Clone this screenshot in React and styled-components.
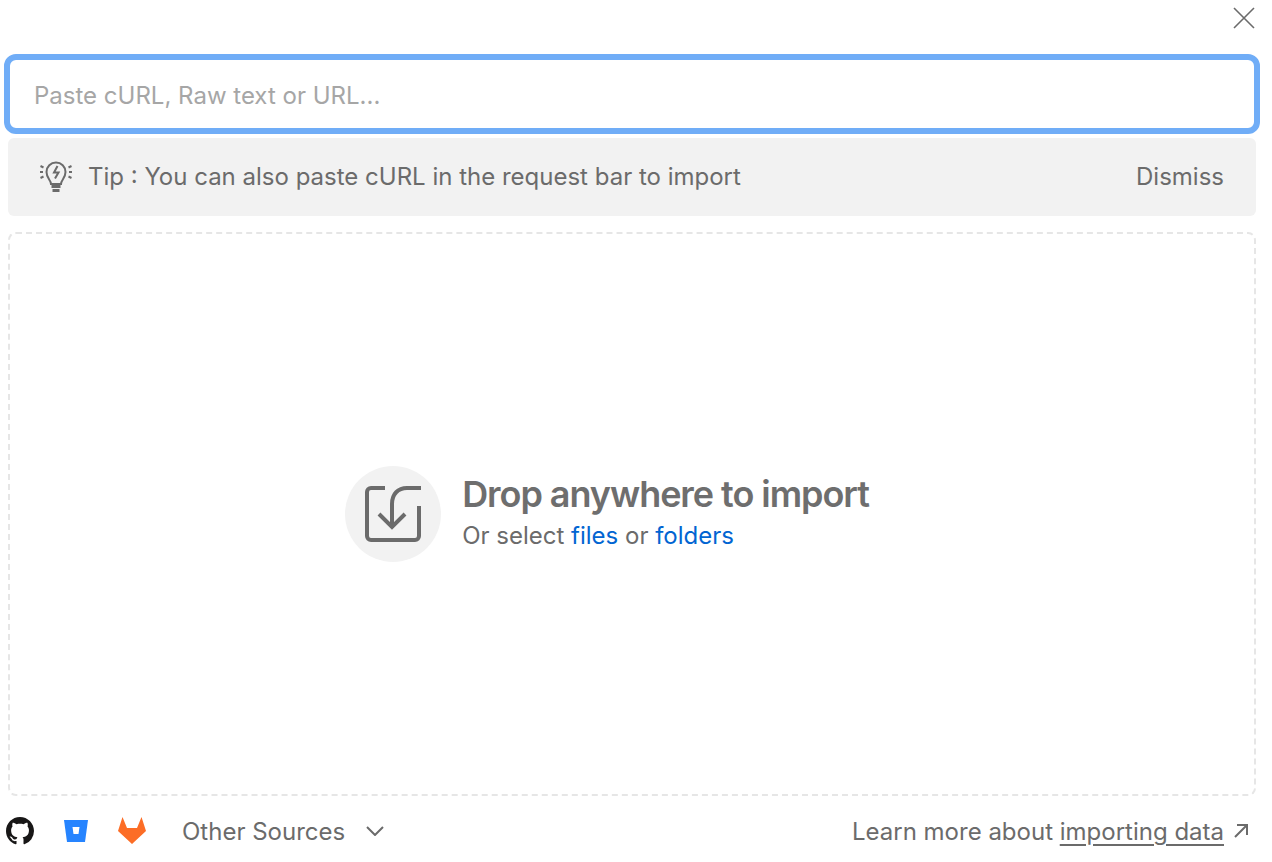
import React from "react";
import styled, { createGlobalStyle } from "styled-components";

const GlobalStyle = createGlobalStyle`
  html, body { margin: 0; padding: 0; background: #fff; }
  * { box-sizing: border-box; }
  body { font-family: Inter, "Liberation Sans", sans-serif; color: #6b6b6b; }
`;

const Page = styled.div`
  width: 1272px;
  height: 862px;
  padding: 0 16px 0 8px;
  display: flex;
  flex-direction: column;
  overflow: hidden;
`;

const TopBar = styled.div`
  height: 54px;
  flex: none;
  display: flex;
  justify-content: flex-end;
  align-items: flex-start;
  padding-top: 6px;
`;

const CloseButton = styled.button`
  width: 24px;
  height: 24px;
  padding: 0;
  border: 0;
  background: none;
  color: #6b6b6b;
  display: flex;
`;

const SearchInput = styled.input`
  width: 1256px;
  height: 80px;
  margin: 0 -4px;
  padding: 2px 24px 0;
  flex: none;
  border: 6px solid #70adf7;
  border-radius: 12px;
  outline: 0;
  font: 400 24px Inter, sans-serif;
  color: #6b6b6b;
  &::placeholder { color: #a6a6a6; opacity: 1; }
`;

const TipBar = styled.div`
  height: 78px;
  margin-top: 4px;
  flex: none;
  padding: 0 32px 2px 30px;
  border-radius: 6px;
  background: #f2f2f2;
  display: flex;
  align-items: center;
  gap: 14px;
  font-size: 24px;
  svg { margin-top: 2px; }
`;

const TipText = styled.span`
  flex: 1;
`;

const DropZone = styled.div`
  height: 564px;
  margin-top: 16px;
  flex: none;
  border: 2px dashed #e6e6e6;
  border-radius: 8px;
  display: flex;
  align-items: center;
  justify-content: center;
  gap: 22px;
  padding-right: 50px;
`;

const IconCircle = styled.div`
  width: 96px;
  height: 96px;
  border-radius: 50%;
  background: #f2f2f2;
  display: flex;
  align-items: center;
  justify-content: center;
`;

const DropText = styled.div`
  display: flex;
  flex-direction: column;
  margin-left: -1px;
`;

const DropTitle = styled.div`
  font-size: 36px;
  line-height: 38px;
  font-weight: 600;
  letter-spacing: -1.05px;
  margin-bottom: 6px;
  color: #6e6e6e;
`;

const DropSub = styled.div`
  font-size: 24px;
  line-height: 34px;
`;

const Link = styled.a`
  color: #0265d2;
`;

const Footer = styled.div`
  flex: 1;
  display: flex;
  align-items: center;
  margin: 0 8px 0 -2px;
  padding-top: 4px;
  font-size: 24px;
`;

const Sources = styled.div`
  display: flex;
  align-items: center;
  flex: 1;
`;

const SourceIcon = styled.div`
  height: 28px;
  margin-right: ${(p) => p.$gap}px;
  display: flex;
  align-items: center;
`;

const SourceLabel = styled.span`
  margin-right: 21px;
`;

const LearnMore = styled.div`
  display: flex;
  align-items: center;
  gap: 10px;
`;

const LearnLink = styled.span`
  text-decoration: underline;
  text-decoration-thickness: 2px;
  text-underline-offset: 4px;
`;

const App = () => (
  <Page>
    <GlobalStyle />
    <TopBar>
      <CloseButton>
        <svg width="24" height="24" viewBox="0 0 24 24" fill="none" stroke="currentColor" strokeWidth="1.6">
          <path d="M2 2l20 20M22 2L2 22" />
        </svg>
      </CloseButton>
    </TopBar>
    <SearchInput placeholder="Paste cURL, Raw text or URL..." />
    <TipBar>
      <svg width="36" height="36" viewBox="0 0 36 36" fill="none" stroke="currentColor" strokeWidth="2">
        <path d="M13 25c0-4-4.500-5.500-4.500-12a9.500 9.500 0 0 1 19 0c0 6.500-4.500 8-4.500 12z" />
        <path d="M19.500 7l-3.500 6.500h4.500L17 19.500" />
        <path d="M13.500 27.500h9M14.500 31.500h7" strokeWidth="3" />
        <path d="M2 13h3M31 13h3M2.500 7l3 1.500M33.500 7l-3 1.500M2.500 19l3-1.500M33.500 19l-3-1.500" />
      </svg>
      <TipText>Tip : You can also paste cURL in the request bar to import</TipText>
      <span>Dismiss</span>
    </TipBar>
    <DropZone>
      <IconCircle>
        <svg width="56" height="56" viewBox="0 0 56 56" fill="none" stroke="currentColor" strokeWidth="4">
          <path d="M20 2H6a4 4 0 0 0-4 4v44a4 4 0 0 0 4 4h44a4 4 0 0 0 4-4V20" />
          <path d="M56 2H42C33 2 27 8 27 18v24" />
          <path d="M14 28l13 13 13-13" />
        </svg>
      </IconCircle>
      <DropText>
        <DropTitle>Drop anywhere to import</DropTitle>
        <DropSub>
          Or select <Link>files</Link> or <Link>folders</Link>
        </DropSub>
      </DropText>
    </DropZone>
    <Footer>
      <Sources>
        <SourceIcon $gap={30}>
          <svg width="28" height="28" viewBox="0 0 16 16" fill="#181717">
            <path d="M8 0C3.58 0 0 3.58 0 8c0 3.540 2.290 6.530 5.470 7.590.4.070.550-.170.550-.380 0-.190-.010-.820-.010-1.490-2.010.370-2.530-.490-2.690-.940-.090-.230-.480-.940-.820-1.130-.280-.150-.680-.520-.010-.530.630-.010 1.080.580 1.230.820.720 1.210 1.870.870 2.330.660.070-.520.280-.870.510-1.070-1.780-.2-3.640-.890-3.640-3.950 0-.870.310-1.590.820-2.150-.080-.2-.360-1.020.080-2.120 0 0 .670-.210 2.200.820.640-.180 1.320-.270 2-.270s1.360.090 2 .270c1.530-1.040 2.200-.820 2.200-.820.440 1.100.160 1.920.080 2.120.510.560.820 1.270.820 2.150 0 3.070-1.870 3.750-3.650 3.950.290.250.540.730.540 1.480 0 1.070-.010 1.930-.010 2.200 0 .210.150.460.550.380A8.010 8.010 0 0 0 16 8c0-4.420-3.580-8-8-8z" />
          </svg>
        </SourceIcon>
        <SourceIcon $gap={30}>
          <svg width="24" height="22" viewBox="0 0 24 22">
            <path fill="#2684ff" d="M0 0h24l-3 22H3z" />
            <path fill="#fff" d="M8.500 7h7l-1 7h-5z" />
          </svg>
        </SourceIcon>
        <SourceIcon $gap={36}>
          <svg width="28" height="28" viewBox="0 0 28 28">
            <path fill="#fc6d26" d="M14 27L0 14 4.500 0 9 11h10l4.500-11L28 14z" />
          </svg>
        </SourceIcon>
        <SourceLabel>Other Sources</SourceLabel>
        <svg width="18" height="10" viewBox="0 0 18 10" fill="none" stroke="currentColor" strokeWidth="2">
          <path d="M1 1l8 8 8-8" />
        </svg>
      </Sources>
      <LearnMore>
        <span>
          Learn more about <LearnLink>importing data</LearnLink>
        </span>
        <svg width="14" height="14" viewBox="0 0 14 14" fill="none" stroke="currentColor" strokeWidth="2">
          <path d="M1 13L13 1M3 1h10v10" />
        </svg>
      </LearnMore>
    </Footer>
  </Page>
);

export default App;
